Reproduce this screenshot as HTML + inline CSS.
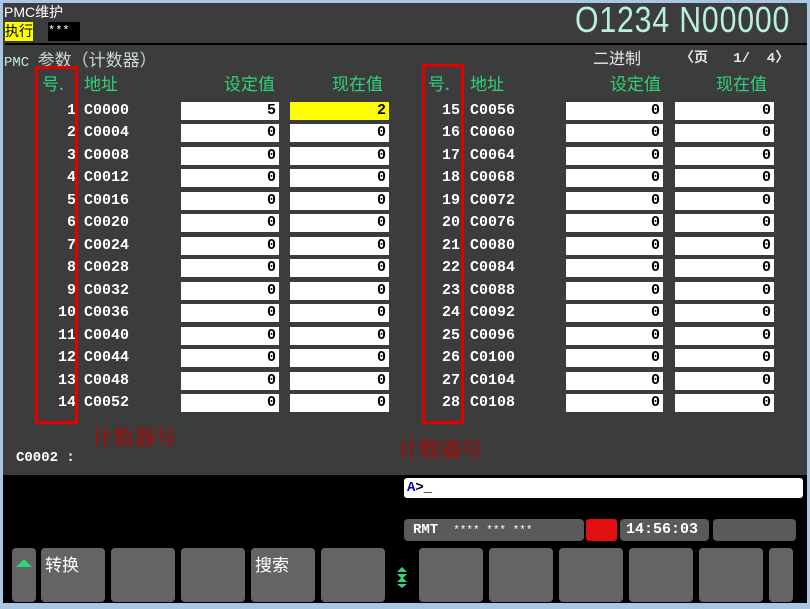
<!DOCTYPE html>
<html><head><meta charset="utf-8"><style>
*{margin:0;padding:0;box-sizing:border-box}
body{width:810px;height:609px;background:#a9c6e4;position:relative;overflow:hidden;font-family:"Liberation Mono","Noto Sans CJK SC",monospace}
.p{position:absolute}
#main{left:3px;top:3px;width:804px;height:472px;background:#3c3c3c}
#blk{left:3px;top:475px;width:804px;height:128px;background:#000}
.t{position:absolute;white-space:nowrap}
.w{color:#fff;font-weight:bold;font-size:14px}
.g{color:#2fd37a;font-family:"Noto Sans CJK SC",sans-serif;font-size:17px}
.box{position:absolute;background:#fff;height:18px;color:#000;font-weight:bold;font-size:15px;text-align:right;padding-right:3px;line-height:18px}
.num{position:absolute;width:30px;text-align:right;color:#fff;font-weight:bold;font-size:15px;line-height:18px}
.adr{position:absolute;color:#fff;font-weight:bold;font-size:15px;line-height:18px}
.red{position:absolute;border:3px solid #e00000}
.rt{position:absolute;color:#c00000;font-family:"Noto Serif CJK SC",serif;font-size:21px}
.sk{position:absolute;top:548px;height:54px;background:#646464;border-radius:4px}
.sk span{color:#fff;font-family:"Noto Sans CJK SC",sans-serif;font-size:17px;position:absolute;left:4px;top:3px}
</style></head><body>
<div class="p" id="main"></div>
<div class="p" id="blk"></div>
<div class="t" style="left:4px;top:2px;color:#fff;font-size:14px;font-family:'Liberation Sans','Noto Sans CJK SC',sans-serif">PMC维护</div>
<div class="t" style="left:5px;top:22px;background:#ffff00;color:#000;font-size:14px;font-family:'Noto Sans CJK SC',sans-serif;line-height:19px;height:19px">执行</div>
<div class="t" style="left:48px;top:22px;background:#000;color:#fff;font-size:12px;width:32px;height:19px;line-height:19px">***</div>
<div class="t" style="left:575px;top:-1px;color:#b8f0dc;font-family:'Liberation Sans',sans-serif;font-size:36px;letter-spacing:1px;transform:scaleX(0.84);transform-origin:left">O1234 N00000</div>
<div class="p" style="left:5px;top:43px;width:802px;height:2px;background:#000"></div>
<div class="t" style="left:4px;top:46px;color:#b8f0dc;font-size:14px;font-family:'Liberation Mono','Noto Sans CJK SC',monospace">PMC <span style="font-family:'Noto Sans CJK SC';font-size:17px;color:#c8d8d0">参数（计数器）</span></div>
<div class="t" style="left:593px;top:45px;color:#e8e8e8;font-size:16px;font-family:'Noto Sans CJK SC',sans-serif">二进制</div>
<div class="t" style="left:680px;top:47px;color:#e8e8e8;font-size:14px;font-family:'Liberation Mono','Noto Sans CJK SC',monospace;font-weight:bold">〈页 &nbsp;&nbsp;1/ &nbsp;4〉</div>
<div class="t g" style="left:42px;top:70px">号.</div>
<div class="t g" style="left:84px;top:70px">地址</div>
<div class="t g" style="left:224px;top:70px">设定值</div>
<div class="t g" style="left:332px;top:70px">现在值</div>
<div class="t g" style="left:428px;top:70px">号.</div>
<div class="t g" style="left:470px;top:70px">地址</div>
<div class="t g" style="left:610px;top:70px">设定值</div>
<div class="t g" style="left:716px;top:70px">现在值</div>

<div class="num" style="left:46px;top:102px">1</div><div class="adr" style="left:84px;top:102px">C0000</div><div class="box" style="left:181px;top:102px;width:98px">5</div><div class="box" style="left:290px;top:102px;width:99px;background:#ffff00">2</div>
<div class="num" style="left:46px;top:124px">2</div><div class="adr" style="left:84px;top:124px">C0004</div><div class="box" style="left:181px;top:124px;width:98px">0</div><div class="box" style="left:290px;top:124px;width:99px">0</div>
<div class="num" style="left:46px;top:147px">3</div><div class="adr" style="left:84px;top:147px">C0008</div><div class="box" style="left:181px;top:147px;width:98px">0</div><div class="box" style="left:290px;top:147px;width:99px">0</div>
<div class="num" style="left:46px;top:169px">4</div><div class="adr" style="left:84px;top:169px">C0012</div><div class="box" style="left:181px;top:169px;width:98px">0</div><div class="box" style="left:290px;top:169px;width:99px">0</div>
<div class="num" style="left:46px;top:192px">5</div><div class="adr" style="left:84px;top:192px">C0016</div><div class="box" style="left:181px;top:192px;width:98px">0</div><div class="box" style="left:290px;top:192px;width:99px">0</div>
<div class="num" style="left:46px;top:214px">6</div><div class="adr" style="left:84px;top:214px">C0020</div><div class="box" style="left:181px;top:214px;width:98px">0</div><div class="box" style="left:290px;top:214px;width:99px">0</div>
<div class="num" style="left:46px;top:237px">7</div><div class="adr" style="left:84px;top:237px">C0024</div><div class="box" style="left:181px;top:237px;width:98px">0</div><div class="box" style="left:290px;top:237px;width:99px">0</div>
<div class="num" style="left:46px;top:259px">8</div><div class="adr" style="left:84px;top:259px">C0028</div><div class="box" style="left:181px;top:259px;width:98px">0</div><div class="box" style="left:290px;top:259px;width:99px">0</div>
<div class="num" style="left:46px;top:282px">9</div><div class="adr" style="left:84px;top:282px">C0032</div><div class="box" style="left:181px;top:282px;width:98px">0</div><div class="box" style="left:290px;top:282px;width:99px">0</div>
<div class="num" style="left:46px;top:304px">10</div><div class="adr" style="left:84px;top:304px">C0036</div><div class="box" style="left:181px;top:304px;width:98px">0</div><div class="box" style="left:290px;top:304px;width:99px">0</div>
<div class="num" style="left:46px;top:327px">11</div><div class="adr" style="left:84px;top:327px">C0040</div><div class="box" style="left:181px;top:327px;width:98px">0</div><div class="box" style="left:290px;top:327px;width:99px">0</div>
<div class="num" style="left:46px;top:349px">12</div><div class="adr" style="left:84px;top:349px">C0044</div><div class="box" style="left:181px;top:349px;width:98px">0</div><div class="box" style="left:290px;top:349px;width:99px">0</div>
<div class="num" style="left:46px;top:372px">13</div><div class="adr" style="left:84px;top:372px">C0048</div><div class="box" style="left:181px;top:372px;width:98px">0</div><div class="box" style="left:290px;top:372px;width:99px">0</div>
<div class="num" style="left:46px;top:394px">14</div><div class="adr" style="left:84px;top:394px">C0052</div><div class="box" style="left:181px;top:394px;width:98px">0</div><div class="box" style="left:290px;top:394px;width:99px">0</div>

<div class="num" style="left:430px;top:102px">15</div><div class="adr" style="left:470px;top:102px">C0056</div><div class="box" style="left:566px;top:102px;width:97px">0</div><div class="box" style="left:675px;top:102px;width:99px">0</div>
<div class="num" style="left:430px;top:124px">16</div><div class="adr" style="left:470px;top:124px">C0060</div><div class="box" style="left:566px;top:124px;width:97px">0</div><div class="box" style="left:675px;top:124px;width:99px">0</div>
<div class="num" style="left:430px;top:147px">17</div><div class="adr" style="left:470px;top:147px">C0064</div><div class="box" style="left:566px;top:147px;width:97px">0</div><div class="box" style="left:675px;top:147px;width:99px">0</div>
<div class="num" style="left:430px;top:169px">18</div><div class="adr" style="left:470px;top:169px">C0068</div><div class="box" style="left:566px;top:169px;width:97px">0</div><div class="box" style="left:675px;top:169px;width:99px">0</div>
<div class="num" style="left:430px;top:192px">19</div><div class="adr" style="left:470px;top:192px">C0072</div><div class="box" style="left:566px;top:192px;width:97px">0</div><div class="box" style="left:675px;top:192px;width:99px">0</div>
<div class="num" style="left:430px;top:214px">20</div><div class="adr" style="left:470px;top:214px">C0076</div><div class="box" style="left:566px;top:214px;width:97px">0</div><div class="box" style="left:675px;top:214px;width:99px">0</div>
<div class="num" style="left:430px;top:237px">21</div><div class="adr" style="left:470px;top:237px">C0080</div><div class="box" style="left:566px;top:237px;width:97px">0</div><div class="box" style="left:675px;top:237px;width:99px">0</div>
<div class="num" style="left:430px;top:259px">22</div><div class="adr" style="left:470px;top:259px">C0084</div><div class="box" style="left:566px;top:259px;width:97px">0</div><div class="box" style="left:675px;top:259px;width:99px">0</div>
<div class="num" style="left:430px;top:282px">23</div><div class="adr" style="left:470px;top:282px">C0088</div><div class="box" style="left:566px;top:282px;width:97px">0</div><div class="box" style="left:675px;top:282px;width:99px">0</div>
<div class="num" style="left:430px;top:304px">24</div><div class="adr" style="left:470px;top:304px">C0092</div><div class="box" style="left:566px;top:304px;width:97px">0</div><div class="box" style="left:675px;top:304px;width:99px">0</div>
<div class="num" style="left:430px;top:327px">25</div><div class="adr" style="left:470px;top:327px">C0096</div><div class="box" style="left:566px;top:327px;width:97px">0</div><div class="box" style="left:675px;top:327px;width:99px">0</div>
<div class="num" style="left:430px;top:349px">26</div><div class="adr" style="left:470px;top:349px">C0100</div><div class="box" style="left:566px;top:349px;width:97px">0</div><div class="box" style="left:675px;top:349px;width:99px">0</div>
<div class="num" style="left:430px;top:372px">27</div><div class="adr" style="left:470px;top:372px">C0104</div><div class="box" style="left:566px;top:372px;width:97px">0</div><div class="box" style="left:675px;top:372px;width:99px">0</div>
<div class="num" style="left:430px;top:394px">28</div><div class="adr" style="left:470px;top:394px">C0108</div><div class="box" style="left:566px;top:394px;width:97px">0</div><div class="box" style="left:675px;top:394px;width:99px">0</div>

<div class="red" style="left:35px;top:66px;width:43px;height:358px"></div>
<div class="red" style="left:422px;top:64px;width:42px;height:360px"></div>
<div class="rt" style="left:92px;top:422px">计数器号</div>
<div class="rt" style="left:398px;top:434px">计数器号</div>
<div class="t w" style="left:16px;top:450px">C0002 :</div>

<div class="p" style="left:404px;top:478px;width:399px;height:20px;background:#fff;border-radius:3px"></div>
<div class="t" style="left:407px;top:479px;font-size:14px;font-weight:bold;color:#0000c0;line-height:18px">A<span style="color:#000">&gt;_</span></div>

<div class="p" style="left:404px;top:519px;width:180px;height:22px;background:#5a5a5a;border-radius:4px"></div>
<div class="t" style="left:413px;top:521px;color:#fff;font-weight:bold;font-size:14px;line-height:18px">RMT <span style="font-size:11px;font-weight:normal">&nbsp;**** *** ***</span></div>
<div class="p" style="left:586px;top:519px;width:31px;height:22px;background:#e01010;border-radius:3px"></div>
<div class="p" style="left:620px;top:519px;width:89px;height:22px;background:#5a5a5a;border-radius:4px"></div>
<div class="t" style="left:626px;top:521px;color:#fff;font-weight:bold;font-size:15px;line-height:18px">14:56:03</div>
<div class="p" style="left:713px;top:519px;width:83px;height:22px;background:#5a5a5a;border-radius:4px"></div>

<div class="sk" style="left:12px;width:24px"><svg width="24" height="20" style="position:absolute;left:0;top:4px"><polygon points="4,15 12,7 20,15" fill="#2fd37a"/></svg></div>
<div class="sk" style="left:41px;width:64px"><span>转换</span></div>
<div class="sk" style="left:111px;width:64px"></div>
<div class="sk" style="left:181px;width:64px"></div>
<div class="sk" style="left:251px;width:64px"><span>搜索</span></div>
<div class="sk" style="left:321px;width:64px"></div>
<svg class="p" style="left:395px;top:565px" width="14" height="24"><polygon points="7,2 12,7 2,7" fill="#2fd37a"/><polygon points="2,9 12,9 7,14" fill="#2fd37a"/><polygon points="7,12 12,17 2,17" fill="#2fd37a"/><polygon points="2,19 12,19 7,23" fill="#2fd37a"/></svg>
<div class="sk" style="left:419px;width:64px"></div>
<div class="sk" style="left:489px;width:64px"></div>
<div class="sk" style="left:559px;width:64px"></div>
<div class="sk" style="left:629px;width:64px"></div>
<div class="sk" style="left:699px;width:64px"></div>
<div class="sk" style="left:769px;width:24px"></div>
</body></html>
